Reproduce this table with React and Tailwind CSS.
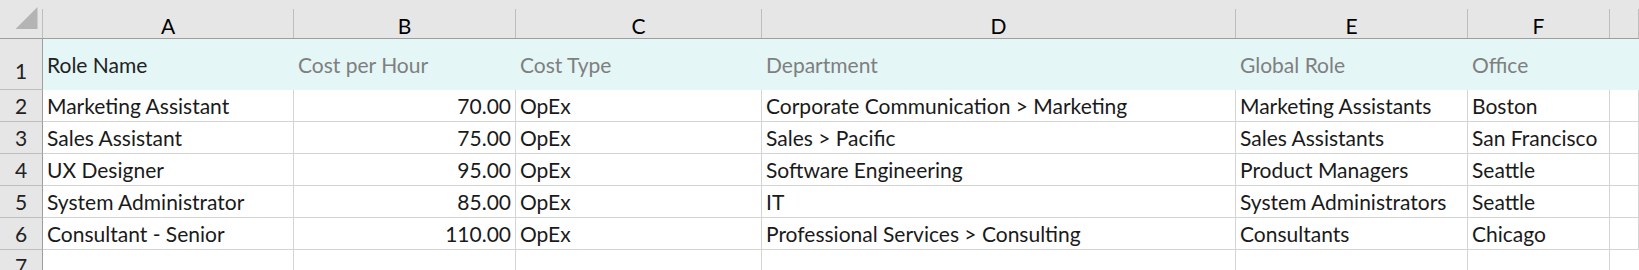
import React from "react";

const columns = [
  { key: "A", width: "w-[251px]" },
  { key: "B", width: "w-[222px]" },
  { key: "C", width: "w-[246px]" },
  { key: "D", width: "w-[474px]" },
  { key: "E", width: "w-[232px]" },
  { key: "F", width: "w-[142px]" },
];

const headers = ["Role Name", "Cost per Hour", "Cost Type", "Department", "Global Role", "Office"];

const rows = [
  ["Marketing Assistant", "70.00", "OpEx", "Corporate Communication > Marketing", "Marketing Assistants", "Boston"],
  ["Sales Assistant", "75.00", "OpEx", "Sales > Pacific", "Sales Assistants", "San Francisco"],
  ["UX Designer", "95.00", "OpEx", "Software Engineering", "Product Managers", "Seattle"],
  ["System Administrator", "85.00", "OpEx", "IT", "System Administrators", "Seattle"],
  ["Consultant - Senior", "110.00", "OpEx", "Professional Services > Consulting", "Consultants", "Chicago"],
];

const font = { fontFamily: "Lato, 'Liberation Sans', sans-serif" };

const RowLabel = ({ n, className = "" }) => (
  <div className={`w-[43px] shrink-0 bg-[#e6e6e6] border-r border-[#9e9e9e] flex justify-center text-[21px] text-[#222] ${className}`}>
    {n}
  </div>
);

export default function App() {
  return (
    <div className="w-[1639px] h-[270px] overflow-hidden bg-white select-none" style={font}>
      {/* Column headers */}
      <div className="flex h-[39px] bg-[#e6e6e6] border-b border-[#9e9e9e]">
        <div className="w-[43px] shrink-0 border-r border-[#bdbdbd] mt-[9px] flex items-start justify-end">
          <svg width="43" height="29" viewBox="0 0 43 29" className="-mt-[9px] shrink-0">
            <polygon points="17,35 39,13 39,35" fill="#b4b4b4" transform="translate(-0.5,-6)" />
          </svg>
        </div>
        {columns.map((c) => (
          <div key={c.key} className={`${c.width} shrink-0 flex flex-col`}>
            <div className="h-[9px]" />
            <div className="flex-1 border-r border-[#bdbdbd] flex items-center justify-center text-[21px] text-black leading-none pt-[3px]">
              {c.key}
            </div>
          </div>
        ))}
        <div className="flex-1 flex flex-col">
          <div className="h-[9px]" />
          <div className="flex-1 border-r border-[#bdbdbd]" />
        </div>
      </div>

      {/* Row 1 */}
      <div className="flex h-[51px]">
        <RowLabel n="1" className="items-end pb-[3px] border-b border-b-[#bdbdbd]" />
        <div className="flex-1 bg-[#e4f6f6] flex items-center text-[21px] text-[#7f7f7f]">
          {headers.map((h, i) => (
            <div key={h} className={`${columns[i].width} shrink-0 px-[4px] ${i === 0 ? "text-[#222]" : ""}`}>
              {h}
            </div>
          ))}
        </div>
      </div>

      {/* Data rows */}
      {rows.map((r, ri) => (
        <div key={ri} className="flex h-[32px]">
          <RowLabel n={ri + 2} className="items-center border-b border-b-[#bdbdbd]" />
          {r.map((v, ci) => (
            <div
              key={ci}
              className={`${columns[ci].width} shrink-0 border-r border-b border-[#d4d4d4] flex items-center px-[4px] text-[21px] text-[#1a1a1a] whitespace-nowrap overflow-hidden ${ci === 1 ? "justify-end" : ""}`}
            >
              {v}
            </div>
          ))}
          <div className="flex-1 border-r border-b border-[#d4d4d4]" />
        </div>
      ))}

      {/* Row 7 */}
      <div className="flex h-[32px]">
        <RowLabel n="7" className="items-center" />
        {columns.map((c) => (
          <div key={c.key} className={`${c.width} shrink-0 border-r border-[#d4d4d4]`} />
        ))}
        <div className="flex-1" />
      </div>
    </div>
  );
}
